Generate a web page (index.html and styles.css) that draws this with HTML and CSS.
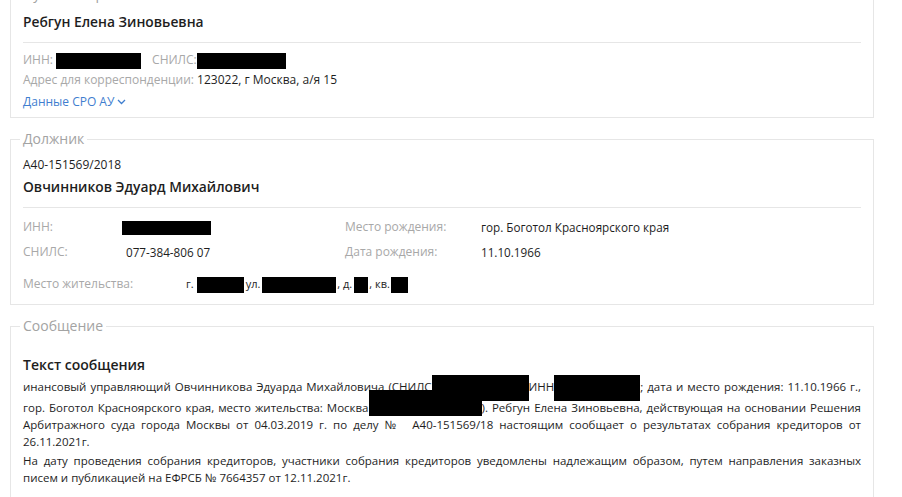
FILE: index.html
```html
<!DOCTYPE html>
<html lang="ru">
<head>
    <meta charset="UTF-8">
    <meta name="viewport" content="width=device-width, initial-scale=1.0">
    <title>Сообщение</title>
    <link rel="stylesheet" href="styles.css">
</head>
<body>
    <div class="page">
        <fieldset class="card card-top">
            <legend>Публикатор</legend>
            <div class="name">Ребгун Елена Зиновьевна</div>
            <div class="sep"></div>
            <div class="line ids">
                <span class="label">ИНН:</span><span class="redact r-inn"></span>
                <span class="label snils">СНИЛС:</span><span class="redact r-snils"></span>
            </div>
            <div class="line addr">
                <span class="label">Адрес для корреспонденции:</span> <span class="value">123022, г Москва, а/я 15</span>
            </div>
            <a class="more" href="#">Данные СРО АУ
                <svg width="9" height="6" viewBox="0 0 9 6"><path d="M1 1l3.5 3.5L8 1" fill="none" stroke="#3f7ecf" stroke-width="1.3"/></svg>
            </a>
        </fieldset>

        <fieldset class="card">
            <legend>Должник</legend>
            <div class="case">А40-151569/2018</div>
            <div class="name">Овчинников Эдуард Михайлович</div>
            <div class="sep"></div>
            <div class="grid">
                <span class="label">ИНН:</span>
                <span><span class="redact r-inn2"></span></span>
                <span class="label">Место рождения:</span>
                <span class="value">гор. Боготол Красноярского края</span>
                <span class="label">СНИЛС:</span>
                <span class="value">077-384-806 07</span>
                <span class="label">Дата рождения:</span>
                <span class="value">11.10.1966</span>
            </div>
            <div class="residence">
                <span class="label">Место жительства:</span>
                <span class="value addr-val">г.<span class="redact r-city"></span>ул.<span class="redact r-street"></span>, д.<span class="redact r-house"></span>, кв.<span class="redact r-flat"></span></span>
            </div>
        </fieldset>

        <fieldset class="card">
            <legend>Сообщение</legend>
            <h2>Текст сообщения</h2>
            <div class="msg">
                <span class="ln first">инансовый управляющий Овчинникова Эдуарда Михайловича (СНИЛС<span class="redact high r-m1"></span>ИНН<span class="redact high r-m2"></span>; дата и место рождения: 11.10.1966 г.,</span>
                <span class="ln second">гор. Боготол Красноярского края, место жительства: Москва<span class="redact low r-m3"></span>). Ребгун Елена Зиновьевна, действующая на основании Решения</span>
                <span class="ln">Арбитражного суда города Москвы от 04.03.2019 г. по делу №&nbsp; А40-151569/18 настоящим сообщает о результатах собрания кредиторов от</span>
                <span class="ln last">26.11.2021г.</span>
                <span class="ln para">На дату проведения собрания кредиторов, участники собрания кредиторов уведомлены надлежащим образом, путем направления заказных</span>
                <span class="ln last">писем и публикацией на ЕФРСБ № 7664357 от 12.11.2021г.</span>
            </div>
        </fieldset>
    </div>
</body>
</html>
```

FILE: styles.css
```css
* {
    margin: 0;
    padding: 0;
    box-sizing: border-box;
}

body {
    font-family: 'Open Sans', 'Noto Sans', sans-serif;
    font-size: 12px;
    color: #1e1e1e;
    background: #fff;
    overflow: hidden;
}

.page {
    width: 864px;
    margin: -15px 0 0 10px;
}

.card {
    border: 1px solid #e6e6e6;
    padding: 0 12px 11px;
    margin-bottom: 12px;
    min-width: 0;
}

.card-top {
    padding-bottom: 6px;
}

legend {
    font-size: 14px;
    line-height: 18px;
    color: #a3a3a3;
    padding: 0 3px;
    margin-left: -3px;
}

.name {
    font-size: 13.8px;
    font-weight: 600;
    line-height: 22px;
    margin-top: 2px;
}

.card-top .name {
    margin-top: 8px;
}

.sep {
    height: 1px;
    background: #e6e6e6;
    margin-top: 9px;
}

.label {
    color: #a8a8a8;
}

.value {
    color: #1e1e1e;
}

.redact {
    display: inline-block;
    background: #000;
    vertical-align: middle;
}

.line {
    line-height: 18px;
}

.ids {
    margin-top: 8px;
}

.ids .r-inn {
    width: 85px;
    height: 16px;
    margin-left: 3px;
}

.ids .snils {
    margin-left: 8px;
}

.ids .r-snils {
    width: 89px;
    height: 16px;
}

.addr {
    margin-top: 2px;
}

.more {
    display: flex;
    align-items: center;
    gap: 3px;
    width: max-content;
    margin-top: 4px;
    line-height: 18px;
    color: #3f7ecf;
    text-decoration: none;
}

.case {
    margin-top: 8px;
    line-height: 18px;
}

.grid {
    display: grid;
    grid-template-columns: 103px 219px 136px 1fr;
    row-gap: 7px;
    line-height: 18px;
    margin-top: 10px;
}

.grid .value {
    font-size: 11.7px;
}

.r-inn2 {
    width: 89px;
    height: 14px;
    margin-left: -4px;
}

.residence {
    display: flex;
    line-height: 18px;
    margin-top: 14px;
}

.residence .label {
    width: 163px;
}

.addr-val {
    font-size: 11px;
}

.r-city {
    width: 47px;
    height: 16px;
    margin: 0 2px 0 3px;
}

.r-street {
    width: 74px;
    height: 16px;
    margin: 0 1px 0 2px;
}

.r-house {
    width: 14px;
    height: 16px;
    margin: 0 1px 0 2px;
}

.r-flat {
    width: 17px;
    height: 16px;
    margin-left: 1px;
}

h2 {
    font-size: 14px;
    font-weight: 600;
    line-height: 22px;
    margin-top: 19px;
}

.msg {
    margin-top: 2px;
    font-size: 11.5px;
    line-height: 17px;
    text-align: justify;
}

.ln {
    display: block;
    text-align-last: justify;
    word-spacing: -1px;
}

.ln.last {
    text-align-last: left;
    word-spacing: normal;
}

.ln.second {
    margin-top: 4px;
}

.ln.para {
    margin-top: 2px;
}

.redact.high {
    vertical-align: baseline;
    height: 26px;
    margin: -3px 0 -10px;
}

.redact.low {
    vertical-align: baseline;
    height: 26px;
    margin: -9px 0 -4px;
}

.r-m1 {
    width: 97px;
}

.r-m2 {
    width: 86px;
    margin-left: 2px;
}

.r-m3 {
    width: 113px;
}
```
